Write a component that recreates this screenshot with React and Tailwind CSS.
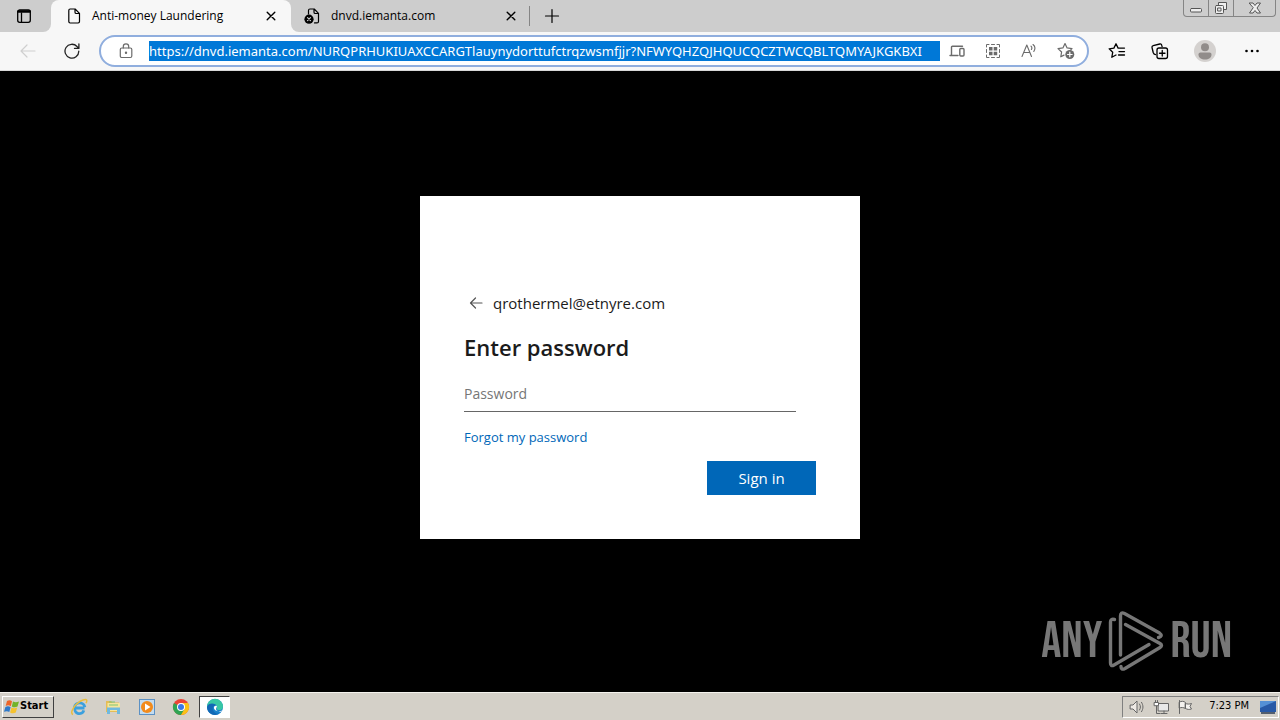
import React from "react";

const line = { fill: "none", stroke: "currentColor", strokeLinecap: "round", strokeLinejoin: "round" };

function Icon({ className = "size-4", children, width = 1.2, box = "0 0 16 16" }) {
  return (
    <svg viewBox={box} className={`shrink-0 ${className}`} strokeWidth={width} {...line} aria-hidden="true">
      {children}
    </svg>
  );
}

function CloseIcon() {
  return <Icon width={1.4} className="size-4"><path d="M4.2 4.2l7.6 7.6M11.8 4.2l-7.6 7.6" /></Icon>;
}

function TabStrip() {
  return (
    <header className="flex h-8 bg-[#f7f7f7] text-xs text-black">
      <div className="flex w-[51px] shrink-0 items-center rounded-br-lg bg-[#cdcdcd] pl-4">
        <button aria-label="Tab actions" className="flex">
          <Icon width={1.3}>
            <rect x="1.7" y="2" width="12.6" height="12.3" rx="2" />
            <path d="M2.300 3.500h11.400" strokeWidth="2.600" />
            <path d="M5.500 5v9" />
          </Icon>
        </button>
      </div>
      <div className="w-60 shrink-0 bg-[linear-gradient(#cdcdcd_50%,#f7f7f7_50%)]">
        <div className="flex h-full items-center rounded-t-lg bg-[#f7f7f7] pl-[15px] pr-3">
          <Icon>
            <path d="M2.8 2.4c0-.8.5-1.4 1.3-1.4h5l4.4 4.4v8.2c0 .8-.6 1.4-1.4 1.4h-8c-.8 0-1.3-.6-1.3-1.4zM9 1v3.200c0 .8.5 1.300 1.300 1.300h3.200" />
          </Icon>
          <span className="ml-[10px] flex-1 whitespace-nowrap">Anti-money Laundering</span>
          <button aria-label="Close tab" className="flex"><CloseIcon /></button>
        </div>
      </div>
      <div className="flex min-w-0 flex-1 items-center rounded-bl-lg bg-[#cdcdcd]">
        <div className="flex w-60 shrink-0 items-center pl-[13px] pr-3">
          <Icon>
            <path d="M4.500 6V2.400C4.500 1.500 5 1 5.900 1h4.300L14.500 5.400v8c0 .9-.6 1.500-1.500 1.500h-2.500M10 1v3.200c0 .8.5 1.300 1.300 1.300h3.200" />
            <circle cx="5" cy="11.200" r="4.600" fill="currentColor" stroke="none" />
            <path d="M3.500 9.700l3 3M6.500 9.700l-3 3" stroke="#cdcdcd" />
          </Icon>
          <span className="ml-[11px] flex-1 whitespace-nowrap">dnvd.iemanta.com</span>
          <button aria-label="Close tab" className="flex"><CloseIcon /></button>
        </div>
        <span className="ml-[-2px] h-5 w-px shrink-0 bg-[#858585]" />
        <button aria-label="New tab" className="ml-[14px] flex">
          <Icon width={1.200}><path d="M8 1.500v13M1.500 8h13" /></Icon>
        </button>
        <div className="flex-1" />
        <div className="mr-1 flex h-[17px] shrink-0 self-start rounded-b border border-t-0 border-[#858585] text-[#555]">
          <button aria-label="Minimize" className="flex w-[25px] items-center justify-center border-r border-[#858585]">
            <Icon className="h-4 w-4" width={1}><rect x="2.500" y="8.500" width="11" height="3.500" rx="1" fill="#eee" /></Icon>
          </button>
          <button aria-label="Restore" className="flex w-[25px] items-center justify-center border-r border-[#858585]">
            <Icon className="h-4 w-4" width={1}>
              <path d="M5.500 4.500v-2h8v7h-2.500" fill="#eee" />
              <rect x="2.500" y="5.500" width="8" height="8" rx="1" fill="#eee" />
              <rect x="5" y="8" width="3" height="3" />
            </Icon>
          </button>
          <button aria-label="Close window" className="flex w-[41px] items-center justify-center">
            <Icon className="h-4 w-4" width={1}>
              <path d="M2.500 3h3.500l2 2.500L10 3h3.500L10 8l3.500 5H10l-2-2.500L6 13H2.500L6 8z" fill="#eee" />
            </Icon>
          </button>
        </div>
      </div>
    </header>
  );
}

function Toolbar() {
  return (
    <nav className="flex h-[39px] items-center border-b border-[#d8d8d8] bg-[#f7f7f7] px-5 text-[#222]">
      <button aria-label="Back" className="flex text-[#cfcfcf]">
        <Icon><path d="M15 8H1M7 2L1 8l6 6" /></Icon>
      </button>
      <button aria-label="Reload" className="ml-7 flex">
        <Icon width={1.300} className="size-4">
          <path d="M14.800 8.200A6.900 6.900 0 1 1 13 3.500L14.800 5.300M14.900 1v4.400h-4.400" />
        </Icon>
      </button>
      <div className="ml-[19px] flex h-8 min-w-0 flex-1 items-center rounded-full border-2 border-[#90aede] bg-white pl-[17px] pr-3 text-[#6b6b6b]">
        <Icon className="size-4">
          <rect x="2.300" y="5" width="11.500" height="9.500" rx="1.500" />
          <path d="M5.300 5V3.500a2.700 2.700 0 0 1 5.400 0V5" />
          <circle cx="8" cy="9.800" r=".6" fill="currentColor" />
        </Icon>
        <input
          aria-label="Address"
          readOnly
          className="ml-[15px] h-5 min-w-0 flex-1 bg-[#0078d7] font-['Noto_Sans',sans-serif] text-[13px] text-white outline-none"
          value="https://dnvd.iemanta.com/NURQPRHUKIUAXCCARGTlauynydorttufctrqzwsmfjjr?NFWYQHZQJHQUCQCZTWCQBLTQMYAJKGKBXI"
        />
        <div className="ml-[9px] flex shrink-0 items-center gap-5">
          <button aria-label="Open on devices" className="flex">
            <Icon width={1.400}>
              <path d="M9 12.500H1M2.500 12V4.200c0-.5.3-.9.900-.9h10.100" />
              <rect x="10.800" y="5.500" width="4.200" height="7.500" rx="1" />
            </Icon>
          </button>
          <button aria-label="QR code" className="flex">
            <Icon width={1}>
              <path d="M1.500 4V1.500H4M12 1.500h2.500V4M14.500 12v2.500H12M4 14.500H1.500V12" />
              <path d="M4 4h3.500v3.500H4zM8.700 4h3.500v3.500H8.700zM4 8.700h3.500v3.500H4zM8.700 8.700h3.500v3.500H8.700z" fill="currentColor" stroke="none" />
              <path d="M6.500 1.500h3M6.500 14.500h3M1.500 6.500v3M14.500 6.500v3" />
            </Icon>
          </button>
          <button aria-label="Read aloud" className="flex">
            <Icon width={1.100}>
              <path d="M1 13.500L5.800 2l4.700 11.500M2.800 9.500h6M10 3.200c1 .9 1 2.300.4 3.300M12 1.500c2.200 1.700 2.200 4.700.8 7" />
            </Icon>
          </button>
          <button aria-label="Add to favorites" className="flex">
            <Icon className="size-[18px]" box="0 0 18 18">
              <path d="M7 13.100l-3.200 1.700.8-4.800L1 6.600l4.900-.7L8 1.500l2.100 4.400 4.900.7-1.500 1.500" />
              <circle cx="12.800" cy="12.500" r="4.500" fill="currentColor" stroke="none" />
              <path d="M12.800 10.200v4.600M10.500 12.500h4.600" stroke="white" />
            </Icon>
          </button>
        </div>
      </div>
      <div className="ml-[19px] flex shrink-0 items-center gap-6 text-black">
        <button aria-label="Favorites" className="flex">
          <Icon className="size-[18px]" box="0 0 18 18" width={1.300}>
            <path d="M8 13l-4.200 2.300.9-5L1.200 6.800l4.700-.7L8 1.800l2.100 4.300H16.500M11 9.600h5.500M10.500 13h6" />
          </Icon>
        </button>
        <button aria-label="Collections" className="flex">
          <Icon className="size-5" box="0 0 20 20" width={1.300}>
            <path d="M5.500 13.700C4 13.300 3.500 12.500 3.200 11.500L2 6.500c-.2-.9.300-1.700 1.200-1.900L9.800 3c.9-.2 1.700.3 1.900 1.200l.4 1.500" />
            <rect x="7" y="7" width="10.500" height="10.500" rx="2" />
            <path d="M12.250 9.500v5.500M9.500 12.250H15" />
          </Icon>
        </button>
        <button aria-label="Profile" className="flex">
          <svg viewBox="0 0 22 22" className="size-[22px]" aria-hidden="true">
            <circle cx="11" cy="11" r="11" fill="#d4d1cf" />
            <circle cx="11" cy="7.300" r="4" fill="#918c8a" />
            <path d="M4.500 14.500c0-1.200.8-2 2-2h9c1.200 0 2 .8 2 2 0 3.200-2.800 5-6.500 5s-6.500-1.800-6.500-5z" fill="#918c8a" />
          </svg>
        </button>
        <button aria-label="Settings and more" className="flex">
          <svg viewBox="0 0 16 16" className="ml-1 size-4" aria-hidden="true">
            <circle cx="2.500" cy="8" r="1.300" /><circle cx="8" cy="8" r="1.300" /><circle cx="13.500" cy="8" r="1.300" />
          </svg>
        </button>
      </div>
    </nav>
  );
}

function SignInCard() {
  return (
    <form className="w-[440px] bg-white px-11 pb-11 pt-[95px] text-[15px] text-[#1b1b1b]" onSubmit={(e) => e.preventDefault()}>
      <div className="flex h-6 items-center">
        <button type="button" aria-label="Back" className="ml-1 flex text-[#555]">
          <Icon><path d="M14 8H2.500M7.500 3l-5 5 5 5" /></Icon>
        </button>
        <span className="ml-[9px]">qrothermel@etnyre.com</span>
      </div>
      <h1 className="mt-4 text-[22px] font-semibold leading-8">Enter password</h1>
      <input
        type="password"
        aria-label="Password"
        placeholder="Password"
        className="mt-[13px] block h-9 w-[332px] border-b border-[#666] text-sm outline-none placeholder:text-[#767676]"
      />
      <a href="#forgot" className="mt-[15px] block text-[13px] leading-5 text-[#0067b8]">Forgot my password</a>
      <div className="mt-[14px] flex justify-end">
        <button className="h-[34px] w-[109px] bg-[#0067b8] text-white">Sign in</button>
      </div>
    </form>
  );
}

function Watermark() {
  return (
    <div className="absolute bottom-[18px] right-12 flex items-center gap-1.5 font-['Bebas_Neue','Liberation_Sans_Narrow',sans-serif] text-[50px] leading-none text-[#777]">
      <span>ANY</span>
      <svg viewBox="0 0 56 64" className="h-16 w-14" fill="none" stroke="currentColor" strokeWidth="3.400" strokeLinecap="round" strokeLinejoin="round" aria-hidden="true">
        <path d="M6.500 9.500Q2.500 8.500 2.500 12v41q0 4 3.500 2L41 34.500" />
        <path d="M12.500 45V6q0-4.500 4-2.500l35 19.500q4 3-1 4.500" />
        <path d="M17.500 14.500L52 33.500q3 2 0 4L17 58.500q-4 2-4-2" />
      </svg>
      <span>RUN</span>
    </div>
  );
}

function Taskbar() {
  return (
    <footer className="flex h-7 items-center border-t border-[#f4f2ed] bg-[#d4d0c8] pr-px font-['DejaVu_Sans_Condensed','Liberation_Sans',sans-serif] text-[11px] text-black">
      <button className="ml-0.5 flex h-[22px] w-[52px] shrink-0 items-center border border-b-[#404040] border-l-white border-r-[#404040] border-t-white pl-px font-bold">
        <svg viewBox="0 0 16 16" className="size-4 shrink-0" aria-hidden="true">
          <path d="M3 2c2-1 3.500-.8 5 .2L6.800 7.200C5.300 6.200 3.500 6 1.700 7z" fill="#ed6528" />
          <path d="M9 2.600c2 1 3.500 1 6 0l-1.500 5c-2 1-3.700 1-5.700-.1z" fill="#73b32b" />
          <path d="M1.400 8c2-1 3.700-.8 5.200.2L5.300 13C3.800 12 2 11.900 0 12.800z" fill="#2f79c9" />
          <path d="M7.500 8.500c2 1 3.700 1 5.700.1l-1.400 4.900c-2 1-3.700 1-5.700-.1z" fill="#f5c22f" />
        </svg>
        Start
      </button>
      <div className="ml-4 flex shrink-0 items-center gap-4">
        <button aria-label="Internet Explorer" className="flex">
          <svg viewBox="0 0 18 18" className="size-[18px]" fill="none" aria-hidden="true">
            <path d="M14.500 10H5a4.500 4.500 0 0 0 8.800 2.300M4.500 9.300a5.200 5.200 0 0 1 10.300 0" stroke="#3ba0de" strokeWidth="2.800" />
            <path d="M3 16.500C-1 15 5 5 13 2c4-1.500 4.500.5 3 3.200" stroke="#e9bd3e" strokeWidth="1.500" />
          </svg>
        </button>
        <button aria-label="Explorer" className="flex">
          <svg viewBox="0 0 18 18" className="size-[18px]" aria-hidden="true">
            <path d="M2 3h5l1.500 1.500H15V14H2z" fill="#e5bd56" />
            <path d="M3.500 5H16v8H3.500z" fill="#f6e59b" />
            <path d="M3 9.500h13V16h-3v-4H6v4H3z" fill="#70b9df" />
            <path d="M5 4h6M5 7h9" stroke="#7cc576" />
          </svg>
        </button>
        <button aria-label="Media Player" className="flex">
          <svg viewBox="0 0 18 18" className="size-[18px]" aria-hidden="true">
            <rect x="1.500" y="1.500" width="15" height="15" fill="#c3dcf0" stroke="#5c91c4" />
            <circle cx="9" cy="9" r="6" fill="#f28b1c" />
            <path d="M7 5.500v7l5.500-3.500z" fill="white" />
          </svg>
        </button>
        <button aria-label="Chrome" className="flex">
          <svg viewBox="0 0 18 18" className="size-[18px]" aria-hidden="true">
            <circle cx="9" cy="9" r="8" fill="#eb4335" />
            <path d="M9 9L2 5A8 8 0 0 0 9 17l4-6z" fill="#2fa453" />
            <path d="M9 9l3.500 2L9 17A8 8 0 0 0 16 5H9z" fill="#fbc116" />
            <circle cx="9" cy="9" r="4" fill="white" />
            <circle cx="9" cy="9" r="3" fill="#3a78e7" />
          </svg>
        </button>
      </div>
      <button aria-label="Edge" className="ml-[9px] flex h-[22px] w-[31px] shrink-0 items-center justify-center border border-b-white border-l-[#404040] border-r-white border-t-[#404040] bg-white">
        <svg viewBox="0 0 18 18" className="size-[18px]" aria-hidden="true">
          <circle cx="9" cy="9" r="8" fill="#1680ca" />
          <path d="M1 9a8 8 0 0 1 16-.5c0 3-2.500 4-5 3.500-2-.4-1-1.500-1-2.800C11 6.500 5 3.500 1 9z" fill="#38c7a5" />
          <path d="M1 9C2 4.500 9 4.500 11 8c-3-1.500-5 1-4 4 .8 2.500 3.500 4 6.500 3.600A8 8 0 0 1 1 9z" fill="#1268b5" />
          <path d="M11 8c-2-1-3.500.5-3 2.500.6 2.300 4.500 3.500 8 2l-1 1.200c-2.500 0-5-1-5-2.700z" fill="white" />
        </svg>
      </button>
      <div className="flex-1" />
      <div className="flex h-[22px] shrink-0 items-center border border-b-white border-l-[#808080] border-r-white border-t-[#808080] pl-1.5 pr-px">
        <div className="flex gap-2 text-[#666]">
          <Icon width={1}>
            <path d="M1.500 6h2.500l4-4v12L4 10H1.500z" fill="#eeeae5" />
            <path d="M10.500 5c1.300 2 1.300 4 0 6M12.500 3.300c2 3 2 6.400 0 9.400" />
          </Icon>
          <Icon width={1}>
            <rect x="5.500" y="4.500" width="10" height="7.500" fill="#e8e8e8" />
            <path d="M8 14.500h6M11 12v2.500M3.500 7v7.500H7" />
            <path d="M1.500 3.500h4v3.200h-4zM2.500 1.500v2M4.500 1.500v2" fill="#fff" />
          </Icon>
          <Icon width={1}>
            <path d="M2.500 1.500v13M2.500 3c2-1 4-1 6 .5v6C6.500 8.500 4.500 8 2.500 9zM8.500 4.500c2 .8 3.500.8 6 0L13 7.500l1.500 2.500c-2.500.8-4 .5-6-.5z" fill="#f3f1ee" />
          </Icon>
        </div>
        <time className="ml-4 whitespace-nowrap">7:23 PM</time>
        <button aria-label="Show desktop" className="ml-[10px] flex">
          <svg viewBox="0 0 18 16" className="h-4 w-[18px]" aria-hidden="true">
            <rect x="1" y="2" width="16" height="11" fill="#2859a6" />
            <path d="M1 2h16L1 9z" fill="#5590d5" />
            <path d="M2 14h14" stroke="#283850" strokeWidth="1.500" />
          </svg>
        </button>
      </div>
    </footer>
  );
}

export default function App() {
  return (
    <div className="flex min-h-screen flex-col bg-black font-['Open_Sans','Noto_Sans',sans-serif]">
      <TabStrip />
      <Toolbar />
      <main className="relative flex flex-1 items-center justify-center bg-black pb-7">
        <SignInCard />
        <Watermark />
      </main>
      <Taskbar />
    </div>
  );
}
